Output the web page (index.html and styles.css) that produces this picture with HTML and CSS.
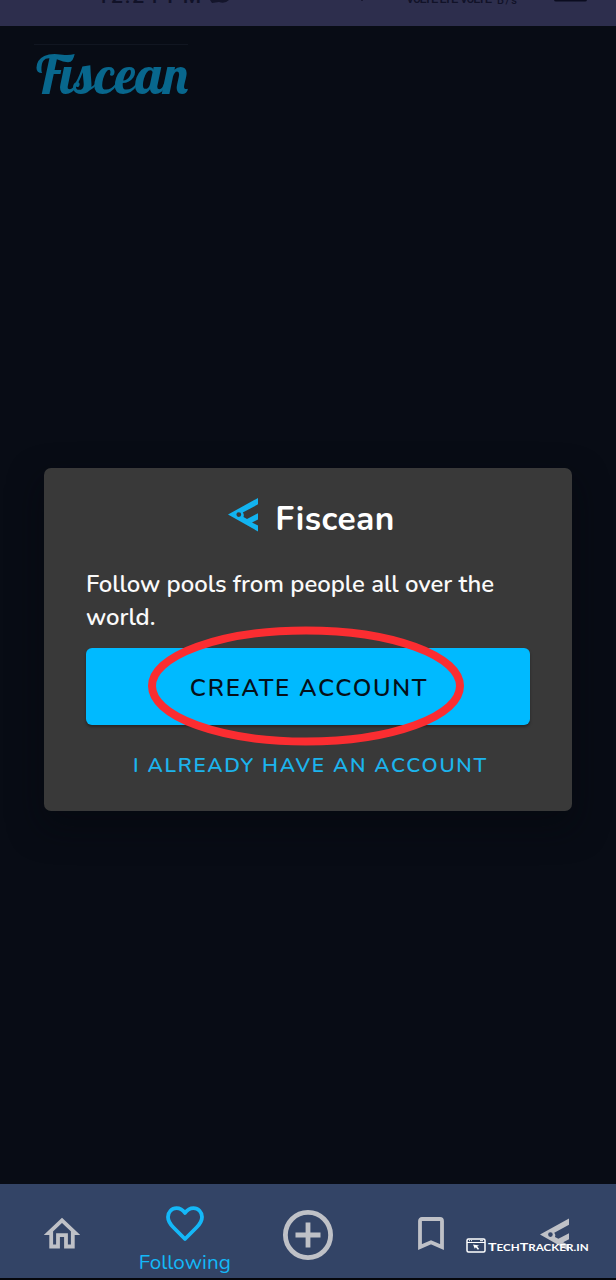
FILE: index.html
```html
<!DOCTYPE html>
<html lang="en">
<head>
<meta charset="utf-8">
<title>Fiscean</title>
<link rel="stylesheet" href="styles.css">
</head>
<body>
<div class="app">
  <div class="status">
    <svg class="status-art" viewBox="0 0 616 26">
      <g class="status-text">
        <text x="97" y="3" font-size="21" textLength="104">12:24 PM</text>
        <text x="406" y="3" font-size="13" textLength="86">VoLTE LTE VoLTE</text>
        <text x="497" y="4" font-size="11" textLength="20">B/s</text>
      </g>
      <path d="M210 0h19q-4 4-10 2l-7 1z" fill="#14152b"/>
      <rect x="554" y="-12" width="33" height="13.5" rx="2" fill="#0b0c1f"/>
      <circle cx="362" cy="0" r="1" fill="#14152b"/>
    </svg>
  </div>
  <header class="header">
    <div class="brand">
      <svg width="158" height="54" viewBox="0 0 158 54">
        <text class="brand-text" x="2" y="49" textLength="152" lengthAdjust="spacingAndGlyphs">Fiscean</text>
      </svg>
    </div>
  </header>
  <main class="content">
    <section class="dialog">
      <div class="title-row">
        <svg class="fish" width="30" height="34" viewBox="0 0 30 34"><use href="#fish"/></svg>
        <h1 class="title">Fiscean</h1>
      </div>
      <p class="message">Follow pools from people all over the world.</p>
      <div class="action">
        <button class="create">CREATE ACCOUNT</button>
        <svg class="ring" width="318" height="120" viewBox="0 0 318 120"><ellipse cx="159" cy="60" rx="154" ry="55.5"/></svg>
      </div>
      <a class="login">I ALREADY HAVE AN ACCOUNT</a>
    </section>
  </main>
  <nav class="tabs">
    <div class="tab">
      <svg width="38" height="34" viewBox="0 0 38 34"><path class="line" d="M5.5 17.2L19 4.3L32.5 17.2H29.8V30.5H23V19.2H15V30.5H8.2V17.2Z"/></svg>
    </div>
    <div class="tab active">
      <svg width="38" height="36" viewBox="0 0 38 36"><path class="heart" d="M19 33L7.5 21.5C3.5 17.5 2 14.8 2 11C2 6 5.7 2.2 10.5 2.2C14 2.2 17 4.2 19 7C21 4.2 24 2.2 27.5 2.2C32.3 2.2 36 6 36 11C36 14.8 34.5 17.5 30.5 21.5Z"/></svg>
      <span class="label">Following</span>
    </div>
    <div class="tab">
      <svg width="52" height="52" viewBox="0 0 52 52"><circle class="plus" cx="26" cy="26" r="22.6"/><path class="plus" d="M26 13.5V38.5M13.5 26H38.5"/></svg>
    </div>
    <div class="tab">
      <svg class="bookmark" width="26" height="34" viewBox="0 0 26 34"><path class="line" d="M2 31V5Q2 3 4 3H22Q24 3 24 5V31L13 26.2Z"/></svg>
    </div>
    <div class="tab">
      <svg class="fish-tab" width="29" height="34" viewBox="0 0 30 34"><path id="fish" fill="currentColor" fill-rule="evenodd" d="M0 16.5L30 0V6.3L14.8 14.6Q16.4 16.6 15.5 19L19 21L30 15.3V21.4L24 24.4L30 27.6V33.5ZM10.8 14.2A2.4 2.4 0 1 0 10.8 19A2.4 2.4 0 1 0 10.8 14.2Z"/></svg>
    </div>
    <div class="watermark">
      <svg width="20" height="15" viewBox="0 0 20 15"><rect x="1" y="1" width="18" height="13" rx="1.5" fill="none" stroke="#fff" stroke-width="1.5"/><path d="M1 4.5H19" stroke="#fff"/><path d="M3 2.7h1M5 2.7h1M14 2.7h3" stroke="#fff"/><path d="M7 6.5l6 1-1.8 1 2 2.5-1.4.8-2-2.5-1 1.5z" fill="#fff"/></svg>
      <svg width="102" height="16" viewBox="0 0 102 16"><text class="mark-text" transform="translate(1 12.5) scale(1.17 1)" x="0" y="0" textLength="86" lengthAdjust="spacingAndGlyphs">T<tspan class="small">ECH</tspan>T<tspan class="small">RACKER.IN</tspan></text></svg>
    </div>
  </nav>
</div>
</body>
</html>
```
FILE: styles.css
```css
* { box-sizing: border-box; }
body { margin: 0; background: #080c15; font-family: Nunito, Lato, "Open Sans", sans-serif; }
.app { width: 616px; height: 1280px; display: flex; flex-direction: column; overflow: hidden; }
.status { height: 26px; background: #2d2e4d; }
.status-art { display: block; width: 616px; height: 26px; }
.status-text { font-family: Roboto, sans-serif; font-weight: 500; fill: #111228; }
.header { height: 78px; padding: 18px 0 0 34px; }
.brand { width: 154px; height: 54px; border-top: 1px solid #111621; }
.brand svg { display: block; }
.brand-text { font-family: Lobster, "Oleo Script", "Lobster Two", Pacifico, "Liberation Serif", serif; font-size: 53.5px; fill: #08678d; }
.content { flex: 1; padding: 364px 44px 0; }
.dialog { height: 343px; padding: 30px 42px 0; background: #393939; border-radius: 7px; box-shadow: 0 14px 32px 2px rgba(5, 7, 13, .5); display: flex; flex-direction: column; }
.title-row { display: flex; justify-content: center; gap: 17px; height: 70px; padding-left: 7px; }
.fish { color: #12b3f0; }
.title { margin: 0; font-size: 33.5px; line-height: 43px; font-weight: 700; color: #fff; letter-spacing: .4px; }
.message { margin: 0; height: 80px; font-size: 23.9px; line-height: 33px; font-weight: 600; color: #fafafa; }
.action { position: relative; height: 78px; }
.create { display: block; width: 100%; height: 77px; border: 0; border-radius: 6px; background: #00baff; color: #061019; font: inherit; font-weight: 650; font-size: 24px; letter-spacing: 1.7px; padding: 3px 0 0 2px; box-shadow: 0 2px 3px rgba(0, 0, 0, .35); }
.ring { position: absolute; left: 61px; top: -22px; }
.ring ellipse { fill: none; stroke: #fb2d31; stroke-width: 8; }
.login { margin-top: 24px; padding-left: 5px; line-height: 30px; text-align: center; color: #1cb4ed; font-size: 20.8px; font-weight: 650; letter-spacing: 1.7px; white-space: nowrap; }
.tabs { position: relative; height: 96px; background: #334466; border-bottom: 2px solid #05070c; display: grid; grid-template-columns: repeat(5, 1fr); color: #bfc1c7; }
.tab { display: flex; flex-direction: column; align-items: center; padding-top: 32px; }
.tab.active { padding-top: 22px; color: #14b8f8; }
.tab:nth-child(3) { padding-top: 25px; }
.label { margin-top: 5px; font-size: 20.7px; line-height: 30px; }
.line { fill: none; stroke: currentColor; stroke-width: 3.8; }
.heart { fill: none; stroke: currentColor; stroke-width: 3.8; stroke-linejoin: round; }
.plus { fill: none; stroke: currentColor; stroke-width: 4.8; }
.fish-tab { margin-top: 2px; }
.watermark { position: absolute; left: 466px; top: 54px; display: flex; gap: 1px; }
.mark-text { font-family: Lato, sans-serif; font-weight: 700; font-size: 12px; fill: #fff; }
.small { font-size: 9.8px; }
```
